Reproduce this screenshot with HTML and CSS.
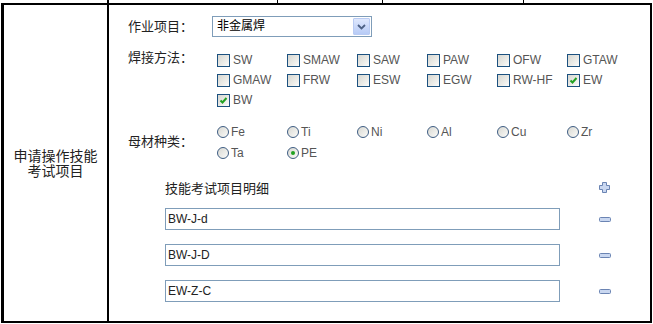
FILE: index.html
```html
<!DOCTYPE html>
<html lang="zh-CN">
<head>
    <meta charset="UTF-8">
    <title>申请操作技能考试项目</title>
    <link rel="stylesheet" href="styles.css">
</head>
<body>
    <!-- tail of the row above, only its bottom edge shows -->
    <div class="prev-row">
        <div class="prev-cell c1"></div>
        <div class="prev-cell c2"></div>
        <div class="prev-cell c3"></div>
        <div class="prev-cell c4"></div>
        <div class="prev-cell c5"></div>
    </div>

    <div class="row">
        <div class="row-head">申请操作技能<br>考试项目</div>
        <div class="row-body">
            <div class="field field-select">
                <span class="field-label">作业项目：</span>
                <div class="select">
                    <span class="select-text">非金属焊</span>
                    <span class="select-btn">
                        <svg width="9" height="6" viewBox="0 0 9 6"><path d="M1 1 L4.5 4.5 L8 1" fill="none" stroke="#4d6185" stroke-width="1.8"/></svg>
                    </span>
                </div>
            </div>

            <div class="field">
                <span class="field-label">焊接方法：</span>
                <div class="opts">
                    <label class="opt"><span class="box"></span>SW</label>
                    <label class="opt"><span class="box"></span>SMAW</label>
                    <label class="opt"><span class="box"></span>SAW</label>
                    <label class="opt"><span class="box"></span>PAW</label>
                    <label class="opt"><span class="box"></span>OFW</label>
                    <label class="opt"><span class="box"></span>GTAW</label>
                    <label class="opt"><span class="box"></span>GMAW</label>
                    <label class="opt"><span class="box"></span>FRW</label>
                    <label class="opt"><span class="box"></span>ESW</label>
                    <label class="opt"><span class="box"></span>EGW</label>
                    <label class="opt"><span class="box"></span>RW-HF</label>
                    <label class="opt"><span class="box"><svg width="11" height="11" viewBox="0 0 11 11"><path d="M2.5 5.5 L4.5 7.5 L8.5 3" fill="none" stroke="#21a121" stroke-width="2"/></svg></span>EW</label>
                    <label class="opt"><span class="box"><svg width="11" height="11" viewBox="0 0 11 11"><path d="M2.5 5.5 L4.5 7.5 L8.5 3" fill="none" stroke="#21a121" stroke-width="2"/></svg></span>BW</label>
                </div>
            </div>

            <div class="field field-mid">
                <span class="field-label">母材种类：</span>
                <div class="opts opts-radio">
                    <label class="opt"><span class="dot"></span>Fe</label>
                    <label class="opt"><span class="dot"></span>Ti</label>
                    <label class="opt"><span class="dot"></span>Ni</label>
                    <label class="opt"><span class="dot"></span>Al</label>
                    <label class="opt"><span class="dot"></span>Cu</label>
                    <label class="opt"><span class="dot"></span>Zr</label>
                    <label class="opt"><span class="dot"></span>Ta</label>
                    <label class="opt"><span class="dot dot-on"></span>PE</label>
                </div>
            </div>

            <div class="detail">
                <div class="detail-row detail-head">
                    <span class="detail-title">技能考试项目明细</span>
                    <span class="tool">
                        <svg width="11" height="11" viewBox="0 0 11 11"><path d="M3.5 0.5 H7.5 V3.5 H10.5 V7.5 H7.5 V10.5 H3.5 V7.5 H0.5 V3.5 H3.5 Z" fill="#c9d7f0" stroke="#6b84b3"/></svg>
                    </span>
                </div>
                <div class="detail-row">
                    <input class="text" type="text" value="BW-J-d">
                    <span class="tool"><svg width="12" height="5" viewBox="0 0 12 5"><rect x="0.5" y="0.5" width="11" height="4" rx="1" fill="#c9d7f0" stroke="#6b84b3"/></svg></span>
                </div>
                <div class="detail-row">
                    <input class="text" type="text" value="BW-J-D">
                    <span class="tool"><svg width="12" height="5" viewBox="0 0 12 5"><rect x="0.5" y="0.5" width="11" height="4" rx="1" fill="#c9d7f0" stroke="#6b84b3"/></svg></span>
                </div>
                <div class="detail-row">
                    <input class="text" type="text" value="EW-Z-C">
                    <span class="tool"><svg width="12" height="5" viewBox="0 0 12 5"><rect x="0.5" y="0.5" width="11" height="4" rx="1" fill="#c9d7f0" stroke="#6b84b3"/></svg></span>
                </div>
            </div>
        </div>
    </div>
</body>
</html>
```

FILE: styles.css
```css
* {
  box-sizing: border-box;
}

body {
  margin: 0;
  font-family: "Liberation Sans", "Noto Sans CJK SC", sans-serif;
  font-size: 12px;
  color: #222;
  background: #fff;
}

/* row above (only a sliver visible) */
.prev-row {
  display: flex;
  height: 3px;
  margin-left: 4px;
}

.prev-cell {
  border-right: 1px solid #000;
}

.c1 { width: 105px; border-right-width: 2px; }
.c2 { width: 169px; }
.c3 { width: 105px; }
.c4 { width: 141px; }
.c5 { flex: 1; border-right: none; }

/* main row */
.row {
  display: flex;
  width: 651px;
  height: 320px;
  margin-left: 1px;
  border-top: 2px solid #000;
  border-left: 3px solid #000;
  border-right: 2px solid #000;
  border-bottom: 2px solid #000;
}

.row-head {
  width: 105px;
  flex: none;
  border-right: 2px solid #000;
  display: flex;
  align-items: center;
  justify-content: center;
  text-align: center;
  font-size: 14px;
  line-height: 15px;
  padding-top: 2px;
}

.row-body {
  flex: 1;
  padding: 11px 0 0 19px;
}

.field {
  display: flex;
  margin-top: 13px;
}

.field-select {
  margin-top: 0;
  align-items: center;
  height: 21px;
}

.field-mid {
  margin-top: 11px;
  align-items: center;
}

.field-label {
  width: 84px;
  flex: none;
  font-size: 13px;
  line-height: 16px;
}

/* select box */
.select {
  display: flex;
  width: 160px;
  height: 21px;
  border: 1px solid #7f9db9;
  background: #fff;
}

.select-text {
  flex: 1;
  padding-left: 4px;
  line-height: 19px;
  font-size: 12px;
  color: #000;
}

.select-btn {
  width: 17px;
  margin: 1px;
  display: flex;
  align-items: center;
  justify-content: center;
  border: 1px solid #b9cbf3;
  border-radius: 1px;
  background: linear-gradient(#dfe8fd, #b7cbf6);
}

/* checkbox / radio grid */
.opts {
  display: grid;
  grid-template-columns: repeat(6, 70px);
  grid-auto-rows: 20px;
  margin-left: 5px;
}

.opts-radio {
  grid-auto-rows: 21px;
}

.opt {
  display: flex;
  align-items: center;
  color: #555;
  font-size: 12px;
}

.box {
  width: 13px;
  height: 13px;
  margin-right: 3px;
  border: 1px solid #1c5180;
  background: linear-gradient(135deg, #d6d6d0, #fbfbf9);
  display: flex;
  align-items: center;
  justify-content: center;
}

.dot {
  width: 12px;
  height: 12px;
  margin-right: 2px;
  border: 1px solid #3d5c82;
  border-radius: 50%;
  background: linear-gradient(135deg, #d8d8d2, #fbfbf9);
  display: flex;
  align-items: center;
  justify-content: center;
}

.dot-on::after {
  content: "";
  width: 4px;
  height: 4px;
  border-radius: 50%;
  background: #21a121;
}

/* detail list */
.detail {
  margin-top: 14px;
  padding-left: 37px;
}

.detail-row {
  display: flex;
  align-items: center;
  margin-top: 14px;
}

.detail-head {
  margin-top: 0;
  height: 20px;
  margin-bottom: -3px;
}

.detail-title {
  width: 395px;
  font-size: 13px;
}

.text {
  width: 395px;
  height: 22px;
  margin: 0;
  padding: 0 2px;
  border: 1px solid #7f9db9;
  font-family: "Liberation Sans", sans-serif;
  font-size: 12px;
  color: #222;
  outline: none;
}

.tool {
  width: 89px;
  display: flex;
  justify-content: center;
}
```
